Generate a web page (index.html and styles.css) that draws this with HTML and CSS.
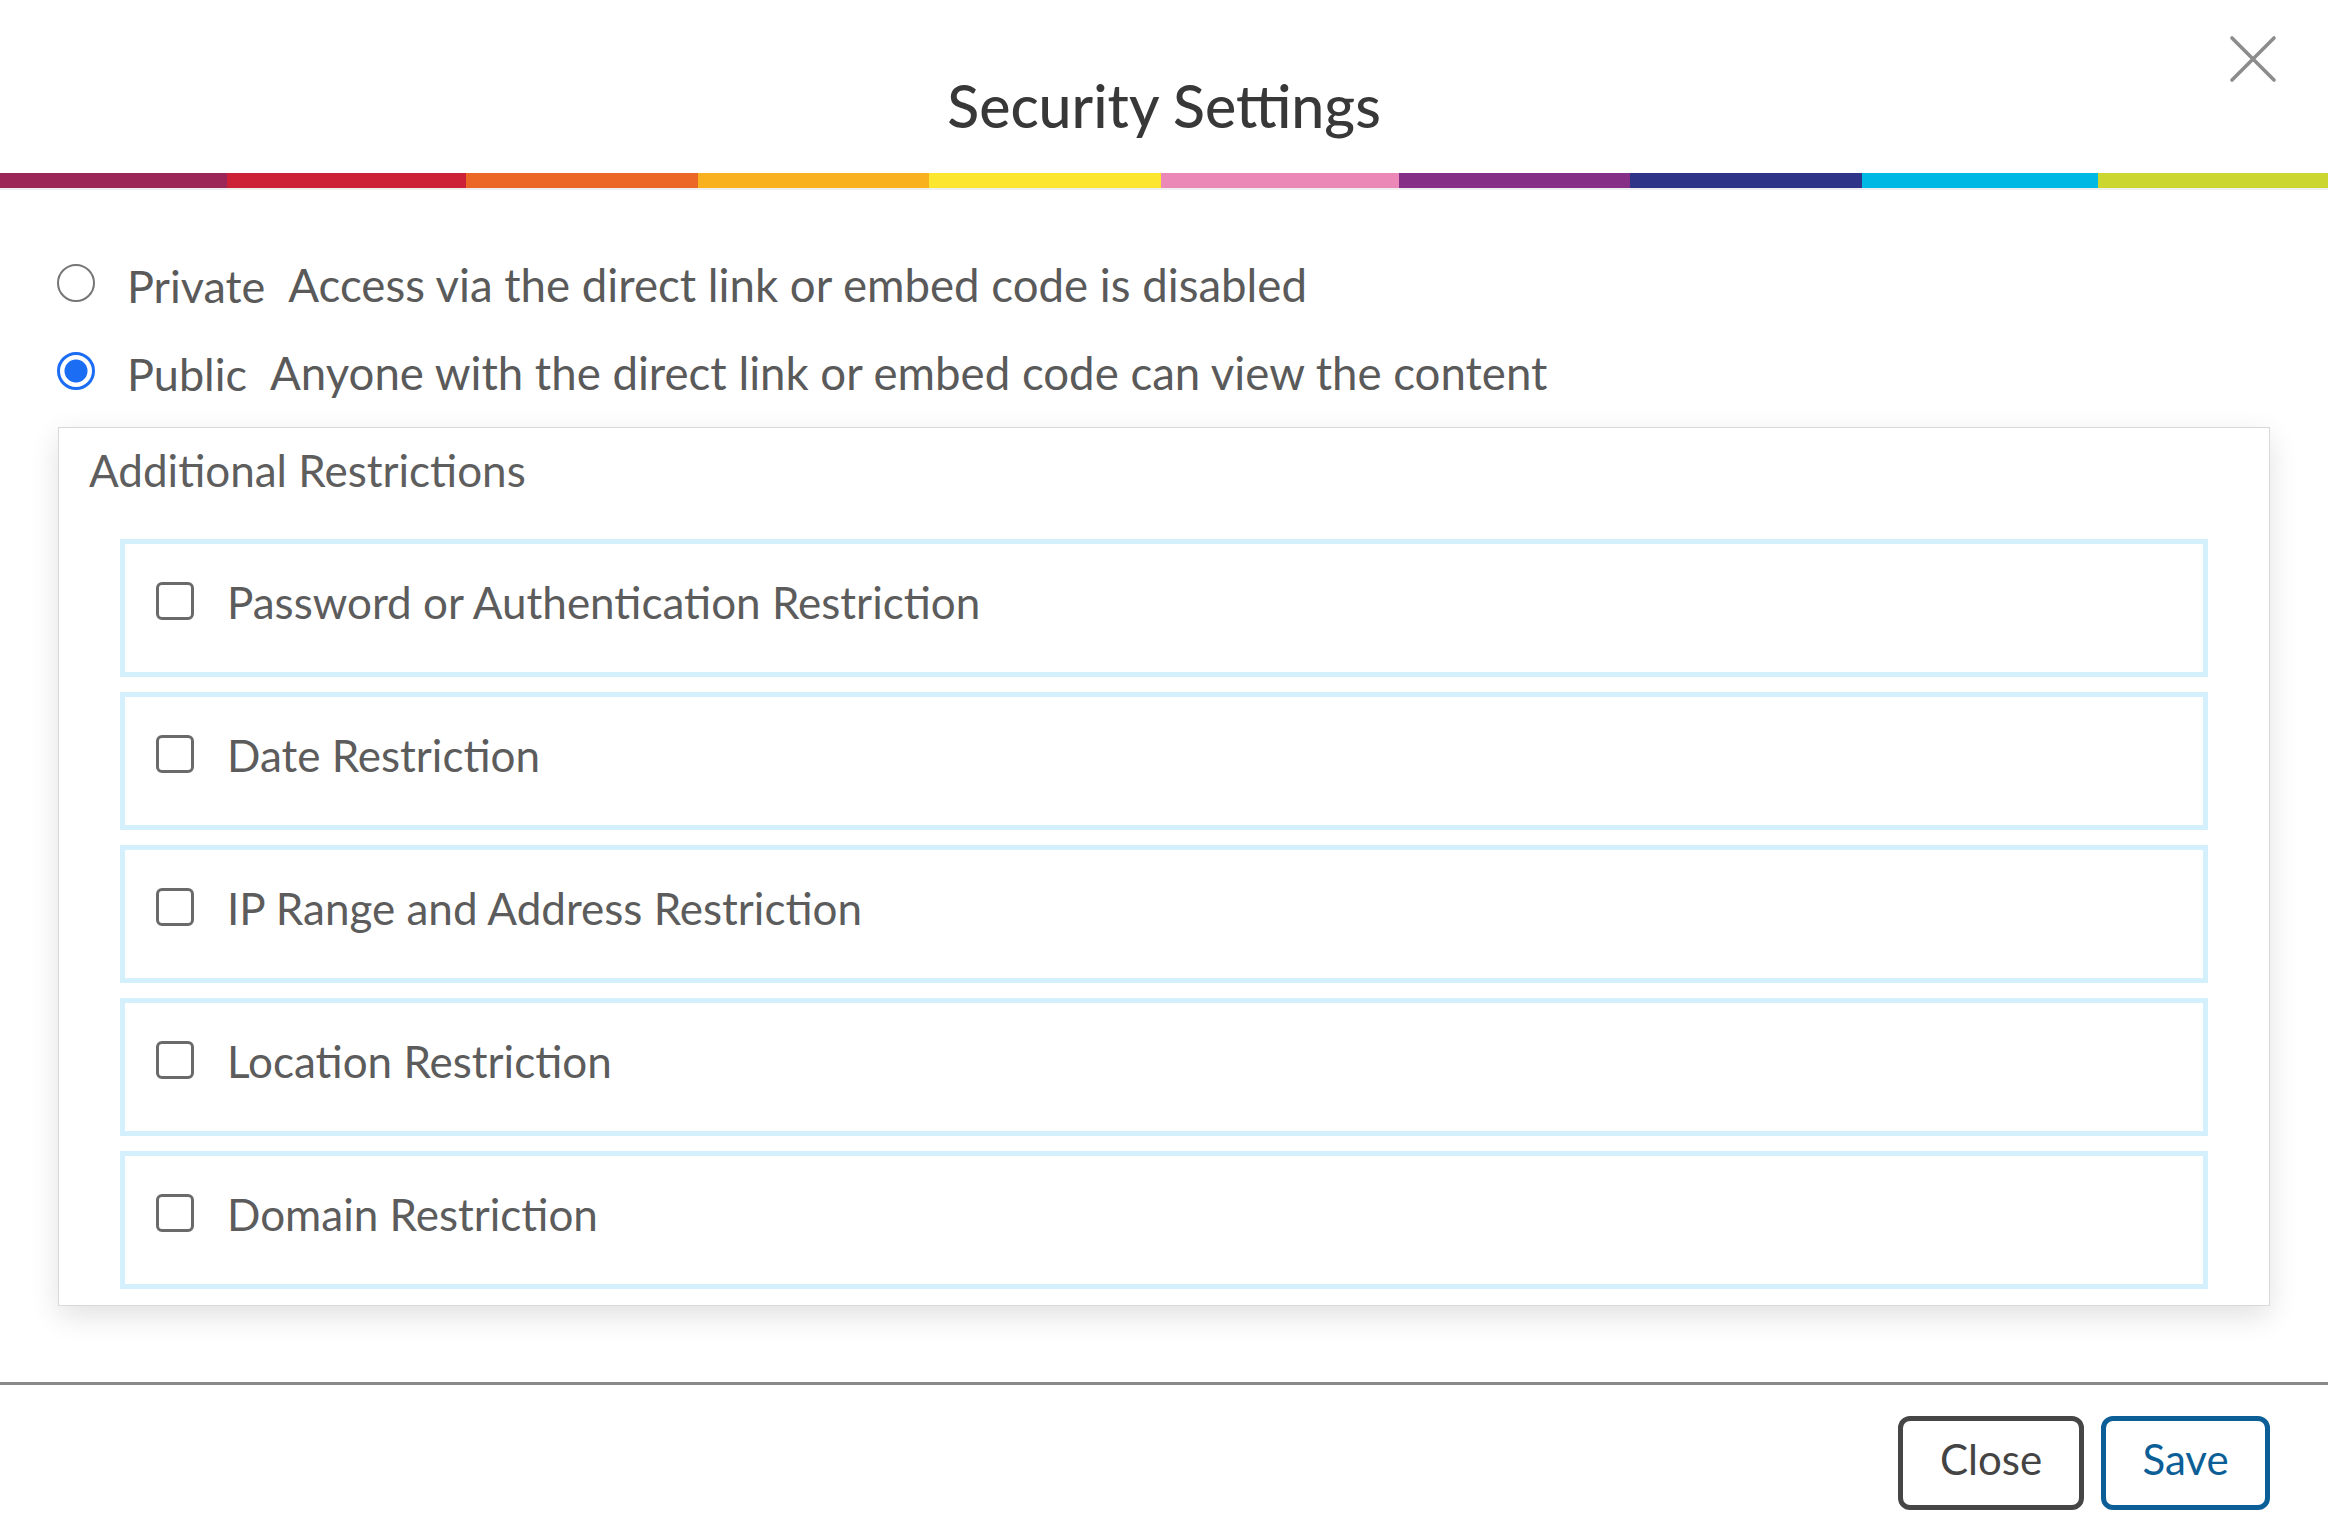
FILE: index.html
```html
<!DOCTYPE html>
<html lang="en">
<head>
<meta charset="utf-8">
<title>Security Settings</title>
<link rel="stylesheet" href="styles.css">
</head>
<body>
<div class="modal">
  <header class="head">
    <h1 class="title">Security Settings</h1>
    <button class="x" type="button" aria-label="Close">
      <svg viewBox="0 0 48 48" width="48" height="48"><path d="M3 3 L45 45 M45 3 L3 45" stroke="#8c8c8c" stroke-width="3.6" stroke-linecap="round" fill="none"/></svg>
    </button>
  </header>
  <div class="rainbow">
    <span class="c1"></span><span class="c2"></span><span class="c3"></span><span class="c4"></span><span class="c5"></span>
    <span class="c6"></span><span class="c7"></span><span class="c8"></span><span class="c9"></span><span class="c10"></span>
  </div>
  <main class="content">
    <div class="opt">
      <span class="radio"></span>
      <span class="name">Private</span>
      <span class="desc">Access via the direct link or embed code is disabled</span>
    </div>
    <div class="opt">
      <span class="radio on"></span>
      <span class="name">Public</span>
      <span class="desc">Anyone with the direct link or embed code can view the content</span>
    </div>
    <section class="restrict">
      <h2 class="restrict-title">Additional Restrictions</h2>
      <div class="list">
        <div class="item"><span class="cb"></span><span class="label">Password or Authentication Restriction</span></div>
        <div class="item"><span class="cb"></span><span class="label">Date Restriction</span></div>
        <div class="item"><span class="cb"></span><span class="label">IP Range and Address Restriction</span></div>
        <div class="item"><span class="cb"></span><span class="label">Location Restriction</span></div>
        <div class="item"><span class="cb"></span><span class="label">Domain Restriction</span></div>
      </div>
    </section>
  </main>
  <footer class="foot">
    <button class="btn btn-close" type="button">Close</button>
    <button class="btn btn-save" type="button">Save</button>
  </footer>
</div>
</body>
</html>
```

FILE: styles.css
```css
* { box-sizing: border-box; }
html, body { margin: 0; padding: 0; background: #fff; }
body {
  width: 2328px;
  height: 1538px;
  overflow: hidden;
  font-family: Lato, "Open Sans", sans-serif;
  color: #5a5a5a;
}
.modal { position: relative; width: 2328px; height: 1538px; }

.head {
  position: relative;
  height: 173px;
  display: flex;
  justify-content: center;
}
.title {
  margin: 0;
  padding-top: 76px;
  font-size: 59px;
  line-height: 1;
  font-weight: 500;
  color: #383838;
}
.x {
  position: absolute;
  top: 35px;
  right: 51px;
  width: 48px;
  height: 48px;
  padding: 0;
  border: 0;
  background: none;
}
.x svg { display: block; }

.rainbow {
  display: flex;
  height: 15px;
  box-shadow: 0 2px 0 #eef0f1;
}
.rainbow span { flex: none; }
.c1 { width: 227px; background: #9b2657; }
.c2 { width: 239px; background: #cc2136; }
.c3 { width: 232px; background: #ec6726; }
.c4 { width: 231px; background: #f9b11d; }
.c5 { width: 232px; background: #fde62f; }
.c6 { width: 238px; background: #ec88b8; }
.c7 { width: 231px; background: #852f87; }
.c8 { width: 232px; background: #2e3589; }
.c9 { width: 236px; background: #00b8e4; }
.c10 { flex: 1 !important; background: #cbd631; }

.content { padding: 51px 58px 0 57px; }

.opt {
  height: 88px;
  display: flex;
  align-items: center;
  font-size: 45px;
  line-height: 1.2;
}
.opt .name, .opt .desc { padding-top: 5px; }
.opt .name { margin-left: 32px; }
.opt .desc { margin-left: 23px; font-size: 45.6px; }
.radio {
  width: 38px;
  height: 38px;
  border-radius: 50%;
  border: 2.5px solid #767676;
  flex: none;
  background: #fff;
}
.radio.on {
  border: 3.5px solid #1b6ef3;
  background: radial-gradient(circle, #1b6ef3 0 11px, #fff 12px);
}

.restrict {
  margin-top: 12px;
  margin-left: 1px;
  border: 1px solid #d9d9d9;
  box-shadow: 0 10px 28px rgba(0, 0, 0, 0.12);
  padding: 16px 0 16px;
  background: #fff;
}
.restrict-title {
  margin: 0 0 42px 30px;
  font-size: 44px;
  line-height: 1.2;
  font-weight: 400;
  color: #5e5e5e;
}
.list {
  display: flex;
  flex-direction: column;
  gap: 15px;
  padding: 0 61px;
}
.item {
  height: 138px;
  border: 5px solid #d4f0fc;
  display: flex;
  align-items: center;
  padding: 0 0 10px 31px;
  gap: 33px;
  font-size: 44px;
  line-height: 1.2;
}
.cb {
  width: 38px;
  height: 38px;
  border: 3px solid #6a6a6a;
  border-radius: 6px;
  flex: none;
  margin-bottom: 4px;
}
.label { color: #5c5c5c; }

.foot {
  position: absolute;
  left: 0;
  right: 0;
  top: 1382px;
  border-top: 3px solid #8a8a8a;
  display: flex;
  justify-content: flex-end;
  gap: 17px;
  padding: 31px 58px 0 0;
}
.btn {
  height: 94px;
  border-radius: 12px;
  background: #fff;
  border: 5px solid #444;
  font-family: Lato, "Open Sans", sans-serif;
  font-size: 42px;
  padding: 0 0 8px;
}
.btn-close { width: 186px; color: #444; border-color: #464646; }
.btn-save { width: 169px; color: #0b5e96; border-color: #0b5e96; }
```
